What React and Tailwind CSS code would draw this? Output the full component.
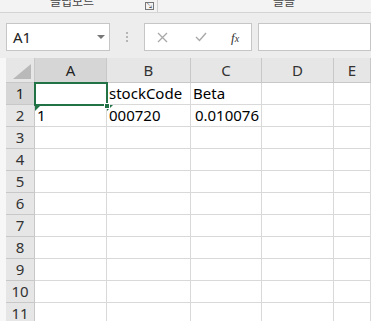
const cols = [
  { key: "A", w: "w-[72px]" },
  { key: "B", w: "w-[84px]" },
  { key: "C", w: "w-[71px]" },
  { key: "D", w: "w-[72px]" },
  { key: "E", w: "flex-1" },
];

const data = {
  1: { A: "", B: "stockCode", C: "Beta" },
  2: { A: "1", B: "000720", C: "0.010076" },
};

const rightAligned = { "2C": true };

const ErrorMark = () => (
  <span className="absolute left-0 top-0 w-0 h-0 border-t-[6px] border-t-[#217346] border-r-[6px] border-r-transparent" />
);

const App = () => {
  const rows = Array.from({ length: 11 }, (_, i) => i + 1);

  return (
    <div className="w-[371px] h-[321px] overflow-hidden bg-white font-['Noto_Sans','Noto_Sans_CJK_KR',sans-serif] select-none">
      {/* ribbon group labels */}
      <div className="h-[12px] bg-[#f3f3f3] flex items-start text-[12px] text-[#444] overflow-hidden relative">
        <span className="absolute left-[50px] -top-[6px] leading-[16px]">클립보드</span>
        <span className="absolute left-[145px] top-[2px] w-[9px] h-[8px] border border-[#777] text-[7px] leading-[6px] text-[#555] flex items-center justify-center">
          ↘
        </span>
        <span className="absolute left-[157px] top-0 w-px h-[12px] bg-[#d0d0d0]" />
        <span className="absolute left-[273px] -top-[6px] leading-[16px]">글꼴</span>
      </div>

      {/* formula bar */}
      <div className="h-[46px] border-t border-[#d4d4d4] bg-[#ededed] flex items-start pt-[10px]">
        <div className="ml-[6px] w-[104px] h-[28px] bg-white border border-[#c6c6c6] flex items-center justify-between pl-[6px] pr-[4px]">
          <span className="text-[15px] text-[#222]">A1</span>
          <span className="w-0 h-0 border-l-[4px] border-r-[4px] border-t-[4px] border-l-transparent border-r-transparent border-t-[#777]" />
        </div>
        <div className="w-[34px] h-[28px] flex flex-col items-center justify-center gap-[2px]">
          <span className="w-[2px] h-[2px] bg-[#b5b5b5]" />
          <span className="w-[2px] h-[2px] bg-[#b5b5b5]" />
          <span className="w-[2px] h-[2px] bg-[#b5b5b5]" />
        </div>
        <div className="w-[108px] h-[28px] bg-white border border-[#c6c6c6] flex items-center">
          <svg className="ml-[12px]" width="11" height="11" viewBox="0 0 11 11">
            <path d="M1 1 L10 10 M10 1 L1 10" stroke="#a8a8a8" strokeWidth="1.3" fill="none" />
          </svg>
          <svg className="ml-[27px]" width="12" height="10" viewBox="0 0 12 10">
            <path d="M1 5 L4.5 8.5 L11 1" stroke="#a8a8a8" strokeWidth="1.4" fill="none" />
          </svg>
          <span className="ml-[24px] text-[13px] italic font-['Liberation_Serif',serif] text-[#333] leading-none">
            f<span className="text-[10px]">x</span>
          </span>
        </div>
        <div className="ml-[6px] flex-1 h-[28px] bg-white border border-[#c6c6c6]" />
      </div>

      {/* column headers */}
      <div className="flex h-[25px]">
        <div className="w-[6px] bg-[#f7f7f7]" />
        <div className="w-[29px] bg-[#e6e6e6] border-r border-b border-[#c8c8c8] relative">
          <span className="absolute right-[3px] bottom-[3px] w-0 h-0 border-b-[15px] border-b-[#b9b9b9] border-l-[18px] border-l-transparent" />
        </div>
        {cols.map((c) => (
          <div
            key={c.key}
            className={`${c.w} border-r border-b border-[#c8c8c8] flex items-center justify-center text-[15px] ${
              c.key === "A" ? "bg-[#d6d6d6] text-[#222]" : "bg-[#e6e6e6] text-[#333]"
            }`}
          >
            {c.key}
          </div>
        ))}
      </div>

      {/* rows */}
      <div className="relative">
        {rows.map((r) => (
          <div key={r} className="flex h-[22px]">
            <div className="w-[6px] bg-[#f7f7f7]" />
            <div
              className={`w-[29px] border-r border-b border-[#c8c8c8] flex items-center justify-center text-[15px] ${
                r === 1 ? "bg-[#d6d6d6] text-[#222]" : "bg-[#e6e6e6] text-[#333]"
              }`}
            >
              {r}
            </div>
            {cols.map((c) => {
              const v = data[r]?.[c.key] ?? "";
              const right = rightAligned[`${r}${c.key}`];
              return (
                <div
                  key={c.key}
                  className={`${c.w} relative border-r border-b border-[#d9d9d9] flex items-center px-[2px] text-[15px] text-black whitespace-nowrap ${
                    right ? "justify-end" : "justify-start"
                  }`}
                >
                  {r === 2 && (c.key === "A" || c.key === "B") && <ErrorMark />}
                  {v}
                </div>
              );
            })}
          </div>
        ))}

        {/* selection of A1 */}
        <div className="absolute left-[34px] top-[-1px] w-[74px] h-[24px] border-2 border-[#217346] pointer-events-none" />
        <div className="absolute left-[104px] top-[20px] w-[6px] h-[6px] bg-[#217346] border border-white" />
      </div>
    </div>
  );
};

export default App;
